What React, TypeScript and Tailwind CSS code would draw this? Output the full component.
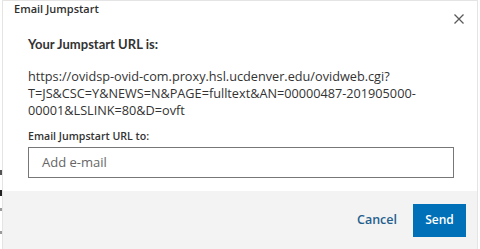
import React from "react";

export default function App() {
  return (
    <div
      className="relative w-[480px] h-[249px] overflow-hidden bg-white text-[#333]"
      style={{ fontFamily: '"Open Sans", "Noto Sans", sans-serif' }}
    >
      <div className="absolute left-0 top-[170px] w-[2px] h-[5px] bg-[#555]" />
      <div className="absolute left-0 top-[190px] w-[2px] h-[6px] bg-[#222]" />
      <div className="absolute left-0 top-[208px] w-[2px] h-[3px] bg-[#999]" />
      <div className="absolute left-0 top-[231px] w-[2px] h-[3px] bg-[#999]" />
      <div className="ml-[2px] w-[476px] h-[249px] border-l border-r border-t border-[#e4e4e4] flex flex-col bg-white">
        <div className="flex items-start justify-between h-[31px]">
          <div className="pl-[11px] pt-[1px] text-[11px] font-semibold leading-[14px] text-[#2f2f2f]">
            Email Jumpstart
          </div>
          <button className="mr-[12px] mt-[12px] text-[#555]" aria-label="Close">
            <svg width="12" height="12" viewBox="0 0 12 12" fill="none" stroke="#5a5a5a" strokeWidth="1.3">
              <path d="M1.5 1.5 L10.5 10.5 M10.5 1.5 L1.5 10.5" />
            </svg>
          </button>
        </div>
        <div className="px-[25px] flex-1">
          <div
            className="text-[13px] font-bold leading-[18px] text-[#333] pt-[3px]"
            style={{ fontFamily: 'Lato, "Open Sans", sans-serif' }}
          >
            Your Jumpstart URL is:
          </div>
          <div className="mt-[15px] text-[12.7px] leading-[17px] text-[#333]">
            https://ovidsp-ovid-com.proxy.hsl.ucdenver.edu/ovidweb.cgi?
            <br />
            T=JS&amp;CSC=Y&amp;NEWS=N&amp;PAGE=fulltext&amp;AN=00000487-201905000-
            <br />
            00001&amp;LSLINK=80&amp;D=ovft
          </div>
          <div className="mt-[10px] text-[10.6px] font-semibold leading-[14px] text-[#333]">
            Email Jumpstart URL to:
          </div>
          <div className="mt-[4px] w-[426px] h-[31px] border border-[#777] flex items-center pl-[13px] text-[13px] text-[#666]">
            Add e-mail
          </div>
        </div>
        <div className="h-[58px] bg-[#f3f3f3] flex items-center justify-end pr-[11px]">
          <button className="text-[12.5px] font-semibold text-[#24608e] mr-[16px]">Cancel</button>
          <button className="w-[53px] h-[33px] bg-[#0070b9] text-white text-[12px] font-semibold">
            Send
          </button>
        </div>
      </div>
    </div>
  );
}
